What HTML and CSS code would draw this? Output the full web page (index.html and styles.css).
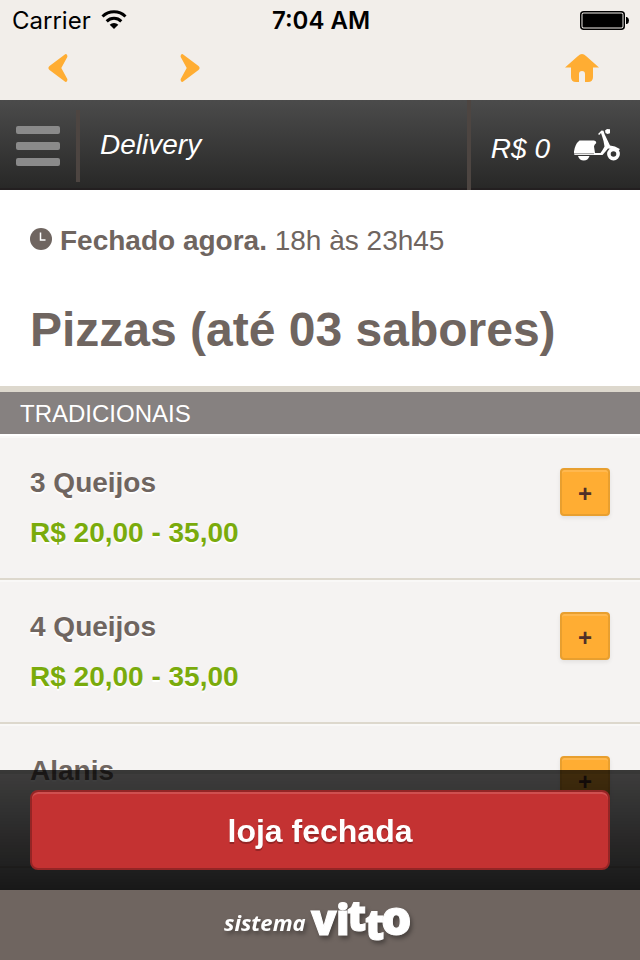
FILE: index.html
```html
<!DOCTYPE html>
<html lang="pt-BR">
<head>
<meta charset="utf-8">
<meta name="viewport" content="width=device-width, initial-scale=1">
<title>Delivery</title>
<link rel="stylesheet" href="styles.css">
</head>
<body>
<div class="app">
  <div class="status">
    <div class="carrier">
      <span>Carrier</span>
      <svg width="26" height="20" viewBox="0 0 26 20" aria-hidden="true">
        <path d="M1.500 6.500a16.500 16.500 0 0 1 23 0M5.700 11.300a10.500 10.500 0 0 1 14.600 0" fill="none" stroke="#000" stroke-width="3"/>
        <path d="M13 19l-4.300-4.300a6.100 6.100 0 0 1 8.600 0z"/>
      </svg>
    </div>
    <time class="clock">7:04 AM</time>
    <svg class="battery" width="50" height="20" viewBox="0 0 50 20" aria-hidden="true">
      <rect x=".75" y="1.750" width="43.500" height="17.500" rx="3" fill="none" stroke="#000" stroke-width="1.500"/>
      <rect x="2.500" y="3.500" width="40" height="14" rx="1"/>
      <path d="M46 7h1q2 1 2 3.500T47 14h-1z"/>
    </svg>
  </div>
  <nav class="browser-nav">
    <button class="icon-button" type="button" aria-label="Voltar">
      <svg width="20" height="28" viewBox="0 0 20 28"><path d="M17.500 0q2.300.2 1.800 3L13.300 14l6 11q.5 2.800-1.800 3L1.500 16q-2.200-2 0-4z"/></svg>
    </button>
    <button class="icon-button" type="button" aria-label="Avançar">
      <svg width="20" height="28" viewBox="0 0 20 28"><path d="M2.500 0Q.2.200.7 3l6 11-6 11q-.5 2.800 1.800 3l16-12q2.200-2 0-4z"/></svg>
    </button>
    <button class="icon-button home" type="button" aria-label="Início">
      <svg width="34" height="28" viewBox="0 0 34 28"><path d="M0 13.500 13 2q4-4 8 0l13 11.500h-6V23q0 5-5 5h-3V20q0-3-3-3t-3 3v8h-3q-5 0-5-5v-9.500z"/></svg>
    </button>
  </nav>
  <header class="header">
    <button class="menu" type="button" aria-label="Menu"><span></span><span></span><span></span></button>
    <span class="page-name">Delivery</span>
    <a class="cart" href="#carrinho">
      <span>R$ 0</span>
      <svg width="46" height="32" viewBox="0 0 46 32" aria-hidden="true">
        <path d="M5.500 11.500H20q2.300.3 2.300 2.500-2.200 1.500-2.300 3.500l1 6.500h5.500q2-2.500 4-6.500-.5-5-2.500-10.500l-1-3-1.800 2-1.200-1L27.500 1.500l2 .2 1 3.300 5.500 11.500q5 0 9.800 3.500l-1 2-3.800-1.500-7-1-2 2.500-3.500 4H.5Q-.2 24 0 22.500 1 15 5.500 11.500z"/>
        <path d="M4 27h11.500q-1.500 4.500-5.750 4.500T4 27z"/>
        <circle cx="39.500" cy="25" r="4.600" fill="none" stroke="#fff" stroke-width="3.600"/>
        <path d="M31 1.500 33 0l3 .3v4L33.500 5l-2-1z"/>
        <path d="M0 24.700h20" stroke="#777" stroke-width=".8"/>
      </svg>
    </a>
  </header>
  <section class="intro">
    <p class="hours">
      <svg width="22" height="22" viewBox="0 0 22 22" aria-hidden="true"><circle cx="11" cy="11" r="11" fill="#6f6560"/><path d="M10.500 4.500V12h5" fill="none" stroke="#fff" stroke-width="1.500"/></svg>
      <span><strong>Fechado agora.</strong> 18h às 23h45</span>
    </p>
    <h1>Pizzas (até 03 sabores)</h1>
  </section>
  <main>
    <h2>TRADICIONAIS</h2>
    <ul class="items">
      <li>
        <div><h3>3 Queijos</h3><p class="price">R$ 20,00 - 35,00</p></div>
        <button class="add" type="button" aria-label="Adicionar 3 Queijos">+</button>
      </li>
      <li>
        <div><h3>4 Queijos</h3><p class="price">R$ 20,00 - 35,00</p></div>
        <button class="add" type="button" aria-label="Adicionar 4 Queijos">+</button>
      </li>
      <li>
        <div><h3>Alanis</h3><p class="price">R$ 20,00 - 35,00</p></div>
        <button class="add" type="button" aria-label="Adicionar Alanis">+</button>
      </li>
    </ul>
  </main>
  <div class="bottom">
    <div class="action"><button class="closed" type="button">loja fechada</button></div>
    <footer>
      <svg class="logo" width="200" height="60" viewBox="0 0 200 60" role="img" aria-label="sistema vitto">
        <text class="logo-small" x="4" y="37">sistema</text>
        <text class="logo-big" x="91 116 127 145" y="41 41 37 46">vitt</text>
        <text class="logo-o" x="161" y="41">o</text>
      </svg>
    </footer>
  </div>
</div>
</body>
</html>
```
FILE: styles.css
```css
* { box-sizing: border-box; }

body {
  margin: 0;
  background: #f5f3f2;
  color: #6f6560;
  font: 28px/32px "Liberation Sans", Arial, sans-serif;
}

h1, h2, h3, p, ul { margin: 0; padding: 0; }

button {
  border: 0;
  padding: 0;
  background: none;
  font: inherit;
  cursor: pointer;
}

svg { display: block; flex: none; }

.app {
  height: 100vh;
  overflow: hidden;
}

.status {
  display: grid;
  grid-template-columns: 1fr auto 1fr;
  align-items: center;
  height: 40px;
  padding: 0 10px 0 12px;
  background: #f2eeea;
  color: #000;
  font: 24px/28px Inter, Roboto, sans-serif;
}

.carrier { display: flex; align-items: center; gap: 10px; }
.clock { padding-top: 2px; font-weight: 600; }
.carrier span { padding-top: 2px; }
.battery { justify-self: end; }

.browser-nav {
  display: flex;
  align-items: center;
  height: 60px;
  padding: 0 41px 4px 48px;
  gap: 112px;
  background: #f2eeea;
}

.icon-button { fill: #ffad33; }
.home { margin-left: auto; }

.header {
  display: flex;
  height: 90px;
  background: linear-gradient(#4b4b4b, #282827 88px, #231f20 88px);
  color: #fff;
  font-style: italic;
}

.menu {
  display: flex;
  flex-direction: column;
  justify-content: center;
  gap: 8px;
  width: 80px;
  height: 72px;
  margin-top: 10px;
  padding-left: 16px;
  border-right: 4px solid #4d4541;
}

.menu span {
  width: 44px;
  height: 8px;
  border-radius: 2px;
  background: #8a8a8a;
}

.page-name { flex: 1; padding: 29px 20px; }

.cart {
  display: flex;
  align-items: center;
  gap: 24px;
  padding: 8px 20px 0;
  border-left: 4px solid #4d4541;
  color: inherit;
  text-decoration: none;
}

.cart svg { fill: #fff; margin-bottom: 8px; }

.intro {
  padding: 35px 30px 28px;
  border-bottom: 6px solid #ddd8cd;
  background: #fff;
}

.hours { display: flex; align-items: center; gap: 8px; }
.hours svg { margin-bottom: 4px; }

h1 {
  margin-top: 45px;
  font-size: 48px;
  line-height: 56px;
}

h2 {
  padding: 6px 20px 4px;
  background: #868180;
  color: #fff;
  font-size: 24px;
  font-weight: 400;
}

.items { list-style: none; border-top: 2px solid #fff; }

.items li {
  display: flex;
  justify-content: space-between;
  height: 144px;
  padding: 31px 30px;
  border-bottom: 2px solid #ddd8cd;
  box-shadow: inset 0 2px #f9f8f7;
  text-shadow: 0 2px #fff;
}

h3 { font-size: 28px; line-height: 32px; }

.price {
  margin-top: 18px;
  color: #7aab0c;
  font-weight: 700;
}

.add {
  width: 50px;
  height: 48px;
  margin-top: 1px;
  padding-top: 3px;
  border: 2px solid #e89f2f;
  border-radius: 4px;
  background: #ffad33;
  box-shadow: inset 0 2px #ffb84f, 0 2px 4px #00000014;
  color: #503028;
  font-size: 24px;
  font-weight: 700;
  text-shadow: none;
}

.bottom {
  position: fixed;
  right: 0;
  bottom: 0;
  left: 0;
}

.action {
  height: 120px;
  padding: 16px 30px 20px;
  border-top: 4px solid #0000001a;
  background: linear-gradient(#000000bf, #000000e6) border-box;
}

.closed {
  width: 100%;
  height: 80px;
  padding-top: 2px;
  border: 2px solid #942525;
  border-radius: 8px;
  background: #c43232;
  box-shadow: inset 0 2px #cf5050;
  color: #fff;
  font-size: 32px;
  font-weight: 700;
  text-shadow: 0 2px #942525;
}

footer {
  display: flex;
  justify-content: center;
  height: 70px;
  padding-top: 4px;
  background: #6f6560;
}

.logo {
  fill: #fff;
  font-family: "Open Sans", sans-serif;
  filter: drop-shadow(2px 3px 2px #00000059);
}

.logo-small { font-size: 22px; font-style: italic; font-weight: 700; }
.logo-big, .logo-o { font-size: 42px; font-weight: 800; stroke: #fff; }
.logo-o { font-size: 48px; }
```
